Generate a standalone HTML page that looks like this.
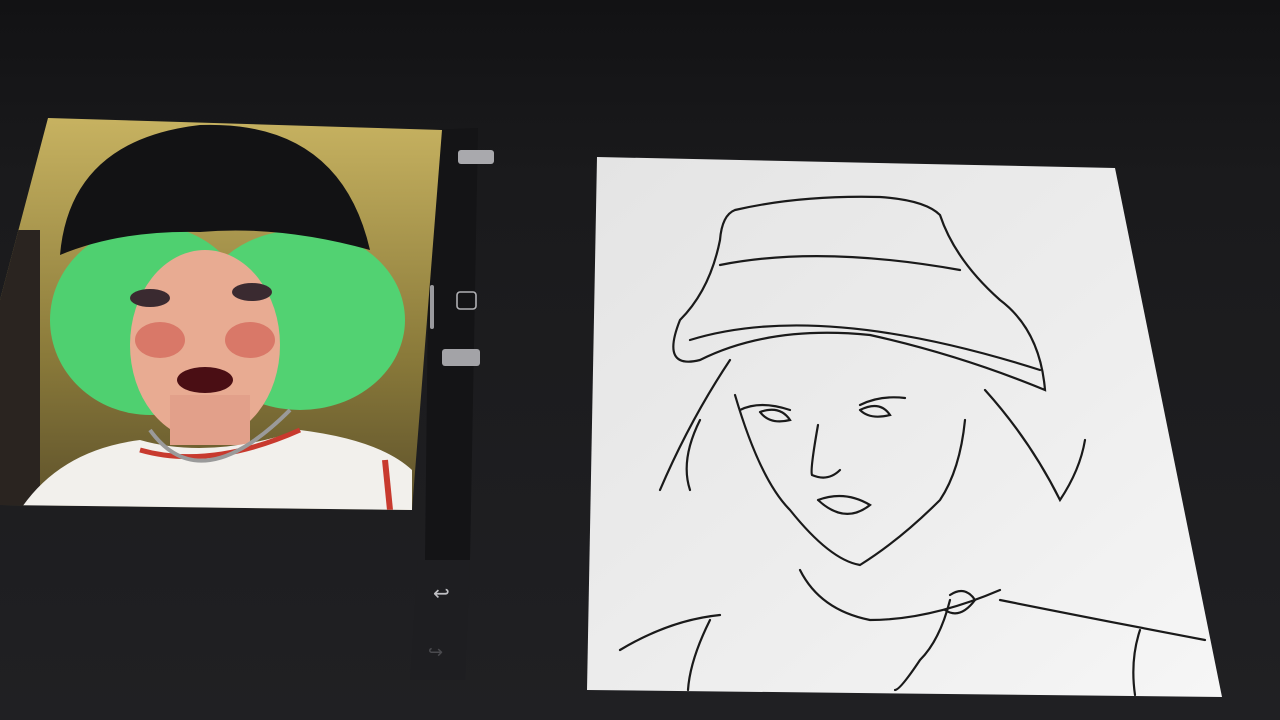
<!DOCTYPE html>
<html><head><meta charset="utf-8"><style>
html,body{margin:0;padding:0;background:#1b1b1d;width:1280px;height:720px;overflow:hidden}
</style></head><body>
<svg width="1280" height="720" viewBox="0 0 1280 720" xmlns="http://www.w3.org/2000/svg">
<defs>
<linearGradient id="bg" x1="0" y1="0" x2="0" y2="1">
<stop offset="0" stop-color="#121214"/><stop offset="0.25" stop-color="#1a1a1c"/><stop offset="1" stop-color="#202023"/></linearGradient>
<linearGradient id="wall" x1="0" y1="0" x2="0" y2="1">
<stop offset="0" stop-color="#c9b462"/><stop offset="0.6" stop-color="#8a7a3a"/><stop offset="1" stop-color="#5a4e2a"/></linearGradient>
<linearGradient id="paper" x1="0" y1="0" x2="1" y2="1">
<stop offset="0" stop-color="#e4e4e4"/><stop offset="0.6" stop-color="#eeeeee"/><stop offset="1" stop-color="#f6f6f6"/></linearGradient>
<clipPath id="ph"><polygon points="48,118 442,130 412,510 0,505 0,300"/></clipPath>
</defs>
<rect width="1280" height="720" fill="url(#bg)"/>
<!-- sidebar -->
<polygon points="430,130 478,128 470,560 425,560" fill="#141416"/>
<polygon points="418,560 470,560 465,680 410,680" fill="#1e1e21"/>
<rect x="458" y="150" width="36" height="14" rx="3" fill="#a9a9ad"/>
<rect x="442" y="349" width="38" height="17" rx="3" fill="#a3a3a7"/>
<rect x="457" y="292" width="19" height="17" rx="3" fill="none" stroke="#b0b0b4" stroke-width="1.6"/>
<rect x="430" y="285" width="4" height="44" rx="2" fill="#9a9a9e"/>
<text x="433" y="600" fill="#c0c0c4" font-family="DejaVu Sans" font-size="20">↩</text>
<text x="428" y="658" fill="#4a4a4e" font-family="DejaVu Sans" font-size="18">↪</text>
<!-- photo -->
<g clip-path="url(#ph)">
<rect x="0" y="110" width="450" height="410" fill="url(#wall)"/>
<rect x="0" y="230" width="40" height="280" fill="#2a2420"/>
<ellipse cx="150" cy="320" rx="100" ry="95" fill="#4fd070"/>
<ellipse cx="300" cy="320" rx="105" ry="90" fill="#52d272"/>
<ellipse cx="205" cy="345" rx="75" ry="95" fill="#e8ab92"/>
<ellipse cx="160" cy="340" rx="25" ry="18" fill="#d97868"/>
<ellipse cx="250" cy="340" rx="25" ry="18" fill="#d97868"/>
<ellipse cx="150" cy="298" rx="20" ry="9" fill="#3a2a30"/>
<ellipse cx="252" cy="292" rx="20" ry="9" fill="#3a2a30"/>
<ellipse cx="205" cy="380" rx="28" ry="13" fill="#4a0e14"/>
<path d="M60,255 Q70,140 200,125 Q340,120 370,250 Q280,225 200,232 Q120,230 60,255Z" fill="#121214"/>
<rect x="170" y="395" width="80" height="50" fill="#e2a08a"/>
<path d="M20,510 Q60,450 140,440 Q210,460 300,430 Q380,440 412,470 L412,520 L0,520Z" fill="#f2f0ec"/>
<path d="M140,450 Q210,470 300,430" stroke="#c83a2e" stroke-width="5" fill="none"/>
<path d="M385,460 L390,510" stroke="#c83a2e" stroke-width="6"/>
<path d="M150,430 Q200,500 290,410" stroke="#9a9a9a" stroke-width="4" fill="none"/>
</g>
<!-- canvas -->
<polygon points="597,157 1115,168 1222,697 587,690" fill="url(#paper)"/>
<g fill="none" stroke="#1a1a1a" stroke-width="2.2" stroke-linecap="round">
<path d="M735,210 Q800,195 880,197 Q925,200 940,215 Q955,260 1000,300 Q1040,330 1045,390 Q960,355 870,335 Q770,325 700,360 Q660,370 680,320 Q710,290 720,240 Q722,215 735,210"/>
<path d="M720,265 Q820,245 960,270"/>
<path d="M690,340 Q820,300 1040,370"/>
<path d="M735,395 Q760,480 790,510 Q830,560 860,565 Q900,540 940,500 Q960,470 965,420"/>
<path d="M740,410 Q760,400 790,410 M860,405 Q880,395 905,398"/>
<path d="M760,412 Q780,405 790,420 Q770,425 760,412 M860,410 Q880,400 890,415 Q870,420 860,410"/>
<path d="M818,425 Q810,470 812,475 Q828,482 840,470"/>
<path d="M818,500 Q845,490 870,505 Q845,525 818,500"/>
<path d="M730,360 Q690,420 660,490 M700,420 Q680,460 690,490 M985,390 Q1030,440 1060,500 Q1080,470 1085,440"/>
<path d="M800,570 Q820,610 870,620 Q930,620 1000,590"/>
<path d="M620,650 Q670,620 720,615 M1000,600 Q1100,620 1205,640"/>
<path d="M710,620 Q690,660 688,690 M1140,630 Q1130,660 1135,695"/>
<path d="M950,600 Q940,640 920,660 Q900,690 895,690"/>
<path d="M950,595 Q965,585 975,600 Q960,620 945,610"/>
</g>
</svg>
</body></html>
